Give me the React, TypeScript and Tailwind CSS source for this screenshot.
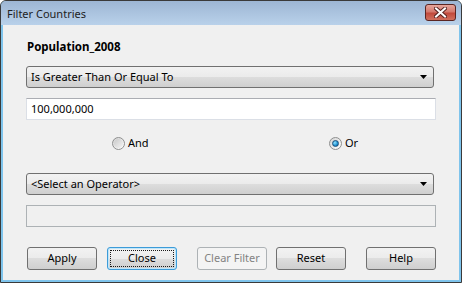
import React from "react";

const font = { fontFamily: '"Noto Sans", "Open Sans", sans-serif' };

function Arrow() {
  return (
    <svg width="7" height="4" viewBox="0 0 7 4" className="block">
      <path d="M0 0 H7 L3.5 4 Z" fill="#000" />
    </svg>
  );
}

function Select({ text }: { text: string }) {
  return (
    <div className="w-[408px] h-[22px] rounded-[3px] border border-[#707070] bg-[linear-gradient(#f2f2f2_0%,#ebebeb_50%,#dddddd_50%,#cfcfcf_100%)] flex items-center pl-[4px] pr-[6px] text-[11px] text-black">
      <span className="flex-1 leading-[16px]">{text}</span>
      <Arrow />
    </div>
  );
}

function Radio({ checked, label }: { checked: boolean; label: string }) {
  return (
    <div className="flex items-center">
      <div className="w-[13px] h-[13px] rounded-full border border-[#8e8f8f] bg-[linear-gradient(135deg,#d4d4d4,#ffffff)] flex items-center justify-center">
        {checked ? (
          <div className="w-[7px] h-[7px] rounded-full bg-[radial-gradient(circle_at_35%_35%,#8fe2ff,#1d8fcf_60%,#0f5c93)] border border-[#1b4f7a]" />
        ) : (
          <div className="w-[9px] h-[9px] rounded-full bg-[linear-gradient(135deg,#c9c9c9,#f4f4f4)]" />
        )}
      </div>
      <span className="ml-[3px] text-[11px] leading-[16px] text-black">{label}</span>
    </div>
  );
}

const gray = "bg-[linear-gradient(#f2f2f2_0%,#ebebeb_50%,#dddddd_50%,#cfcfcf_100%)]";

function Button({
  label,
  variant = "normal",
  className = "",
}: {
  label: string;
  variant?: "normal" | "focus" | "disabled";
  className?: string;
}) {
  if (variant === "disabled") {
    return (
      <div className={"w-[70px] h-[23px] rounded-[3px] border border-[#adb2b5] bg-[#f4f4f4] flex items-center justify-center text-[11px] text-[#838383] " + className}>
        {label}
      </div>
    );
  }
  if (variant === "focus") {
    return (
      <div className={"w-[70px] h-[23px] rounded-[3px] border border-[#3d9bd8] bg-[#bfe6fa] p-[1px] " + className}>
        <div className={"w-full h-full rounded-[2px] p-[1px] " + gray}>
          <div className="w-full h-full border border-dotted border-[#1a1a1a] flex items-center justify-center text-[11px] text-black">
            {label}
          </div>
        </div>
      </div>
    );
  }
  return (
    <div className={"w-[70px] h-[23px] rounded-[3px] border border-[#707070] flex items-center justify-center text-[11px] text-black " + gray + " " + className}>
      {label}
    </div>
  );
}

export default function App() {
  return (
    <div style={font} className="w-[462px] h-[283px] border border-[#3a3a3a] rounded-t-[6px] bg-[#7fc4ec] flex flex-col overflow-hidden">
      <div className="h-[24px] shrink-0 bg-[linear-gradient(#9db6d4,#b9d1ea)] flex items-center pl-[6px] pr-[4px]">
        <span className="flex-1 text-[11px] text-[#1e1e1e] leading-[16px] mt-[1px]">Filter Countries</span>
        <div className="w-[31px] h-[17px] rounded-[3px] border border-[#5a2522] bg-[linear-gradient(#e6a69c_0%,#d4796d_45%,#c24a3c_55%,#d0705e_100%)] flex items-center justify-center mt-[-2px] mr-[1px]">
          <svg width="13" height="11" viewBox="0 0 13 11">
            <path d="M2 1.5 L11 9.5 M11 1.5 L2 9.5" stroke="#5a2522" strokeWidth="4" strokeLinecap="square" />
            <path d="M2 1.5 L11 9.5 M11 1.5 L2 9.5" stroke="#ffffff" strokeWidth="2" strokeLinecap="square" />
          </svg>
        </div>
      </div>
      <div className="flex-1 mx-[2px] mb-[2px] bg-[#f0f0f0] pl-[23px] pt-[14px] flex flex-col">
        <div className="h-[16px] leading-[16px] text-[11.5px] font-bold text-black pl-[1px]">Population_2008</div>
        <div className="mt-[11px]">
          <Select text="Is Greater Than Or Equal To" />
        </div>
        <div className="mt-[10px] w-[410px] h-[22px] border border-[#dbdfe6] border-t-[#abadb3] bg-white flex items-center pl-[4px] text-[11px] text-black">
          100,000,000
        </div>
        <div className="mt-[15px] h-[16px] flex items-center">
          <div className="ml-[86px] w-[217px]">
            <Radio checked={false} label="And" />
          </div>
          <div>
            <Radio checked={true} label="Or" />
          </div>
        </div>
        <div className="mt-[22px]">
          <Select text="<Select an Operator>" />
        </div>
        <div className="mt-[10px] w-[410px] h-[22px] border border-[#adb2b5] bg-[#f0f0f0]" />
        <div className="mt-[20px] flex pl-[1px]">
          <Button label="Apply" />
          <Button label="Close" variant="focus" className="ml-[10px]" />
          <Button label="Clear Filter" variant="disabled" className="ml-[20px]" />
          <Button label="Reset" className="ml-[9px]" />
          <Button label="Help" className="ml-[20px]" />
        </div>
      </div>
    </div>
  );
}
